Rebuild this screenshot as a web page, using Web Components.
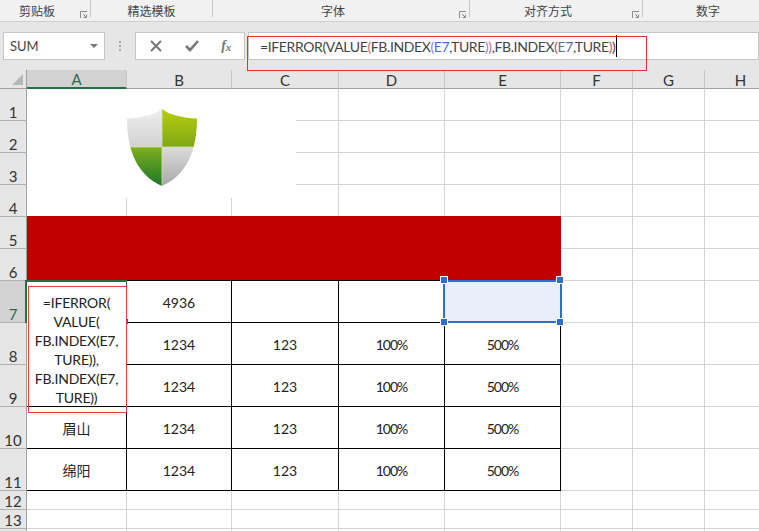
<!DOCTYPE html>
<html lang="zh">
<head>
<meta charset="utf-8">
<title>Sheet</title>
<style>
    html, body {
        margin: 0;
        height: 100%;
        overflow: hidden;
        background: #fff;
        font-family: Lato, "Noto Sans CJK SC", sans-serif;
    }
</style>
</head>
<body>
<x-ribbon>
    <x-ribbon-group launcher style="width:90px">剪贴板</x-ribbon-group>
    <x-ribbon-group style="width:121px">精选模板</x-ribbon-group>
    <x-ribbon-group launcher style="width:256px">字体</x-ribbon-group>
    <x-ribbon-group launcher style="width:172px">对齐方式</x-ribbon-group>
    <x-ribbon-group style="width:130px">数字</x-ribbon-group>
</x-ribbon>
<x-formula-bar name="SUM"></x-formula-bar>
<x-sheet></x-sheet>

<script>
class XRibbon extends HTMLElement {
    constructor() {
        super()
        this.attachShadow({ mode: 'open' }).innerHTML = `
            <style>
                :host {
                    display: flex;
                    box-sizing: border-box;
                    height: 22px;
                    background: #f1f1f1;
                    border-bottom: 1px solid #cfcfcf;
                    overflow: hidden;
                }
            </style>
            <slot></slot>`
    }
}

class XRibbonGroup extends HTMLElement {
    constructor() {
        super()
        this.attachShadow({ mode: 'open' }).innerHTML = `
            <style>
                :host {
                    display: flex;
                    flex: none;
                    position: relative;
                    height: 17px;
                    border-right: 1px solid #c6c6c6;
                    justify-content: center;
                    font-size: 12px;
                    line-height: 24px;
                    color: #444;
                }
                :host([launcher]) .label { margin-right: 16px; }
                svg { position: absolute; right: 2px; top: 11px; }
                :host(:not([launcher])) svg { display: none; }
            </style>
            <span class="label"><slot></slot></span>
            <svg width="8" height="8" viewBox="0 0 8 8" fill="none" stroke="#8a8a8a">
                <path d="M.5 7V.5H7M3 3l3.500 3.500M6.500 3.500v3h-3"/>
            </svg>`
    }
}

class XFormulaBar extends HTMLElement {
    constructor() {
        super()
        this.attachShadow({ mode: 'open' }).innerHTML = `
            <style>
                :host {
                    display: flex;
                    position: relative;
                    z-index: 1;
                    box-sizing: border-box;
                    height: 48px;
                    padding: 10px 0 10px 3px;
                    background: #e6e6e6;
                    font-size: 14px;
                    color: #444;
                }
                .box {
                    display: flex;
                    align-items: center;
                    box-sizing: border-box;
                    height: 28px;
                    background: #fff;
                    border: 1px solid #c6c6c6;
                }
                .name { width: 102px; padding: 0 6px; justify-content: space-between; font-size: 13px; }
                .arrow { width: 0; height: 0; border: 4px solid transparent; border-top: 4px solid #777; border-bottom: 0; }
                .grip { display: flex; flex-direction: column; gap: 2px; width: 2px; margin: 9px 14px 0 14px; }
                .grip i { width: 2px; height: 2px; background: #a6a6a6; }
                .buttons { width: 110px; justify-content: space-around; padding: 0 2px; margin-right: 3px; }
                .formula { flex: 1; padding-left: 11px; white-space: nowrap; letter-spacing: -.38px; }
                .fx { font: italic bold 14px "Liberation Serif", serif; color: #777; }
                .fx sub { font-size: 11px; vertical-align: -1px; }
                .caret { display: inline-block; width: 1px; height: 22px; background: #000; margin-left: 1px; }
                .red { position: absolute; left: 247px; top: 14px; width: 400px; height: 35px; box-sizing: border-box; border: 1px solid #ee2c2c; }
                .pk { color: #d0608a; }
                .pu { color: #8b7fd6; }
                .bl { color: #4472c4; }
                .rd { color: #c8504d; }
                .sl { color: #5b6e9c; }
            </style>
            <div class="box name"><span id="name"></span><span class="arrow"></span></div>
            <div class="grip"><i></i><i></i><i></i></div>
            <div class="box buttons">
                <svg width="14" height="14" viewBox="0 0 14 14" stroke="#777" stroke-width="2" fill="none"><path d="M2 2l10 10M12 2L2 12"/></svg>
                <svg width="16" height="14" viewBox="0 0 16 14" stroke="#777" stroke-width="2.600" fill="none"><path d="M2 7l4 4 8-9"/></svg>
                <span class="fx">f<sub>x</sub></span>
            </div>
            <div class="box formula"><span>=IFERROR(VALUE<span class="pk">(</span>FB.INDEX<span class="pu">(</span><span class="bl">E7</span>,TURE<span class="pu">)</span><span class="pk">)</span>,FB.INDEX<span class="rd">(</span><span class="sl">E7</span>,TURE<span class="rd">)</span>)</span><span class="caret"></span></div>
            <div class="red"></div>`
        this.shadowRoot.querySelector('#name').textContent = this.getAttribute('name')
    }
}

class XShield extends HTMLElement {
    constructor() {
        super()
        const shape = 'M35 20C28 26 13 29 0 29.500C0 61 10 86 35 97C60 86 70 61 70 29.500C57 29 42 26 35 20Z'
        this.attachShadow({ mode: 'open' }).innerHTML = `
            <style>
                :host { display: block; }
                svg { display: block; }
            </style>
            <svg width="72" height="80" viewBox="-1 18 72 80">
                <defs>
                    <clipPath id="s"><path d="${shape}"/></clipPath>
                    <linearGradient id="tl" x1="0" y1="0" x2="0" y2="1"><stop offset="0" stop-color="#f0f0f0"/><stop offset="1" stop-color="#d2d2d2"/></linearGradient>
                    <linearGradient id="tr" x1="0" y1="0" x2="0" y2="1"><stop offset="0" stop-color="#bccf10"/><stop offset="1" stop-color="#7fa814"/></linearGradient>
                    <linearGradient id="bl" x1="0" y1="0" x2="0" y2="1"><stop offset="0" stop-color="#80b01c"/><stop offset="1" stop-color="#17752a"/></linearGradient>
                    <linearGradient id="br" x1="0" y1="0" x2="0" y2="1"><stop offset="0" stop-color="#dcdcdc"/><stop offset="1" stop-color="#a6a6a6"/></linearGradient>
                </defs>
                <g clip-path="url(#s)">
                    <rect x="-1" y="18" width="36" height="40" fill="url(#tl)"/>
                    <rect x="35" y="18" width="36" height="40" fill="url(#tr)"/>
                    <rect x="-1" y="58" width="36" height="40" fill="url(#bl)"/>
                    <rect x="35" y="58" width="36" height="40" fill="url(#br)"/>
                    <path d="M35 18v80M-1 58h72" stroke="#d8e2a8" stroke-width=".8"/>
                </g>
            </svg>`
    }
}

const COLS = [100, 105, 107, 106, 116, 72, 72, 72]
const ROWS = [32, 32, 32, 32, 32, 32, 42, 42, 42, 42, 42, 19, 19, 19]
const LETTERS = 'ABCDEFGH'
const DATA = {
    7: ['', '4936', '', '', ''],
    8: ['', '1234', '123', '100%', '500%'],
    9: ['', '1234', '123', '100%', '500%'],
    10: ['眉山', '1234', '123', '100%', '500%'],
    11: ['绵阳', '1234', '123', '100%', '500%']
}

class XSheet extends HTMLElement {
    constructor() {
        super()
        this.attachShadow({ mode: 'open' }).innerHTML = `
            <style>
                :host {
                    display: block;
                    position: relative;
                    height: 461px;
                    overflow: hidden;
                    font-size: 14px;
                    color: #222;
                }
                .grid {
                    display: grid;
                    grid-template-columns: 27px ${COLS.map((w) => `${w}px`).join(' ')};
                    grid-template-rows: 19px ${ROWS.map((h) => `${h}px`).join(' ')};
                    width: max-content;
                }
                .grid > div { box-sizing: border-box; }
                .corner { background: #e6e6e6; border-right: 1px solid #a0a0a0; border-bottom: 1px solid #a0a0a0; position: relative; }
                .corner::after {
                    content: '';
                    position: absolute;
                    left: 12px;
                    top: 4px;
                    width: 0;
                    height: 0;
                    border-left: 11px solid transparent;
                    border-bottom: 11px solid #b8b8b8;
                }
                .ch {
                    display: flex;
                    align-items: center;
                    justify-content: center;
                    padding-top: 1px;
                    background: #e6e6e6;
                    border-right: 1px solid #c8c8c8;
                    border-bottom: 1px solid #a0a0a0;
                    font-size: 15px;
                    line-height: 16px;
                    color: #333;
                }
                .ch.on { background: #d2d2d2; border-bottom: 2px solid #217346; color: #1f6b50; }
                .rh {
                    display: flex;
                    align-items: flex-end;
                    justify-content: center;
                    background: #e6e6e6;
                    border-right: 1px solid #a0a0a0;
                    border-bottom: 1px solid #b0b0b0;
                    font-size: 15px;
                    line-height: 16px;
                    color: #333;
                }
                .rh.on { background: #d2d2d2; color: #1f6b50; }
                .c {
                    display: flex;
                    align-items: center;
                    justify-content: center;
                    padding-top: 1px;
                    border-right: 1px solid #d4d4d4;
                    border-bottom: 1px solid #d4d4d4;
                }
                .c.b { border-right-color: #000; border-bottom-color: #000; }
                .c.pct { letter-spacing: -1px; }
                .band {
                    grid-column: 2 / span 5;
                    grid-row: 6 / span 2;
                    margin-top: -1px;
                    background: #c00000;
                    border-bottom: 1px solid #000;
                }
                .over { position: absolute; }
                .logo { left: 27px; top: 19px; width: 269px; height: 109px; background: #fff; display: flex; justify-content: center; }
                .logo x-shield { margin-top: 18px; height: 80px; }
                .sel { left: 25px; top: 210px; width: 102px; height: 43px; box-sizing: border-box; border: 2px solid #217346; }
                .sel i { position: absolute; right: -3px; bottom: -3px; width: 5px; height: 5px; background: #217346; }
                .editor {
                    left: 27px;
                    top: 212px;
                    width: 99px;
                    height: 124px;
                    box-sizing: border-box;
                    padding-top: 11px;
                    background: #fff;
                    text-align: center;
                    line-height: 19px;
                    letter-spacing: -.2px;
                    white-space: pre;
                }
                .redbox { left: 28px; top: 216px; width: 99px; height: 127px; box-sizing: border-box; border: 1px solid #ee3b3b; }
                .shape { left: 443px; top: 210px; width: 119px; height: 43px; box-sizing: border-box; background: #e8eff9; border: 2px solid #2f6fca; }
                .h { position: absolute; width: 6px; height: 6px; background: #2f6fca; outline: 1px solid #fff; }
            </style>
            <div class="grid"></div>
            <div class="over logo"><x-shield></x-shield></div>
            <div class="over sel"><i></i></div>
            <div class="over editor">=IFERROR(
VALUE(
FB.INDEX(E7,
TURE)),
FB.INDEX(E7,
TURE))</div>
            <div class="over redbox"></div>
            <div class="over shape">
                <span class="h" style="left:-4px;top:-5px"></span>
                <span class="h" style="right:-3px;top:-5px"></span>
                <span class="h" style="left:-4px;bottom:-4px"></span>
                <span class="h" style="right:-3px;bottom:-4px"></span>
            </div>`
        this.build()
    }

    build() {
        const grid = this.shadowRoot.querySelector('.grid')
        const add = (cls, text) => {
            const cell = document.createElement('div')
            cell.className = cls
            if (text) {
                cell.textContent = text
                if (text.endsWith('%')) {
                    cell.classList.add('pct')
                }
            }
            grid.appendChild(cell)
            return cell
        }
        add('corner')
        for (let i = 0; i < COLS.length; i += 1) {
            add(i === 0 ? 'ch on' : 'ch', LETTERS[i])
        }
        for (let r = 1; r <= ROWS.length; r += 1) {
            // row 14 only shows its top edge, so it gets no label
            add(r === 7 ? 'rh on' : 'rh', r < 14 ? String(r) : '')
            for (let c = 0; c < COLS.length; c += 1) {
                if (r === 5 && c === 0) {
                    add('band')
                }
                if (!((r === 5 || r === 6) && c < 5)) {
                    const row = DATA[r]
                    const boxed = row && c < 5
                    add(boxed ? 'c b' : 'c', boxed ? row[c] : '')
                }
            }
        }
    }
}

customElements.define('x-ribbon', XRibbon)
customElements.define('x-ribbon-group', XRibbonGroup)
customElements.define('x-formula-bar', XFormulaBar)
customElements.define('x-shield', XShield)
customElements.define('x-sheet', XSheet)
</script>
</body>
</html>
